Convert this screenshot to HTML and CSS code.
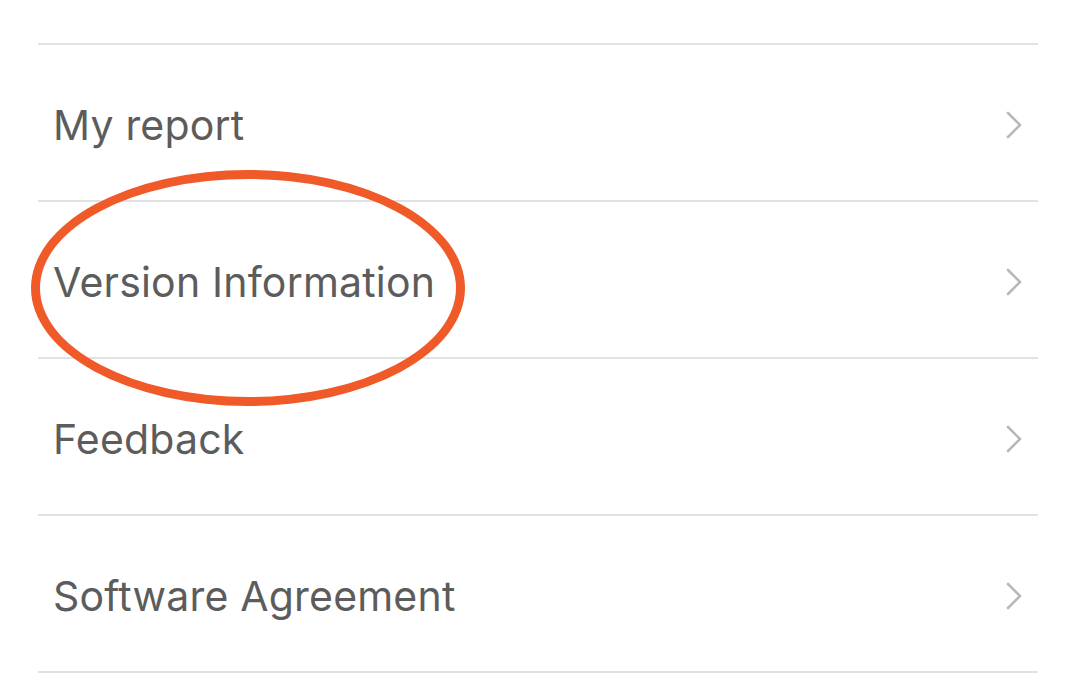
FILE: index.html
```html
<!doctype html>
<html lang="en">
<head>
  <meta charset="utf-8">
  <title>Settings</title>
  <link rel="stylesheet" href="styles.css">
</head>
<body>
  <ul class="menu">
    <li class="menu-top"></li>
    <li class="menu-item"><span>My report</span><svg class="chev" viewBox="0 0 20 30"><path d="M4 3 L16 15 L4 27"/></svg></li>
    <li class="menu-item marked"><span>Version Information</span><svg class="chev" viewBox="0 0 20 30"><path d="M4 3 L16 15 L4 27"/></svg>
      <div class="ring"></div>
    </li>
    <li class="menu-item"><span>Feedback</span><svg class="chev" viewBox="0 0 20 30"><path d="M4 3 L16 15 L4 27"/></svg></li>
    <li class="menu-item"><span>Software Agreement</span><svg class="chev" viewBox="0 0 20 30"><path d="M4 3 L16 15 L4 27"/></svg></li>
  </ul>
</body>
</html>
```

FILE: styles.css
```css
html,body{margin:0;padding:0;background:#fff}
body{font-family:Inter,Roboto,"Helvetica Neue",Arial,sans-serif;overflow:hidden}
.menu{list-style:none;margin:0;padding:0 42px 0 38px}
.menu-top{height:43px;border-bottom:2px solid #e2e2e2}
.menu-item{
  border-bottom:2px solid #e2e2e2;
  display:flex;align-items:center;justify-content:space-between;
  padding:4px 14px 0 15px;box-sizing:border-box;height:157px;position:relative;
  font-size:41px;color:#5c5c5c;letter-spacing:.2px
}
.chev{width:20px;height:30px;fill:none;stroke:#b8b8b8;stroke-width:2.6;stroke-linecap:round;stroke-linejoin:round}
.ring{
  position:absolute;left:-7px;top:-32px;width:416px;height:218px;
  border:9px solid #ef5a28;border-radius:50%
}
```
